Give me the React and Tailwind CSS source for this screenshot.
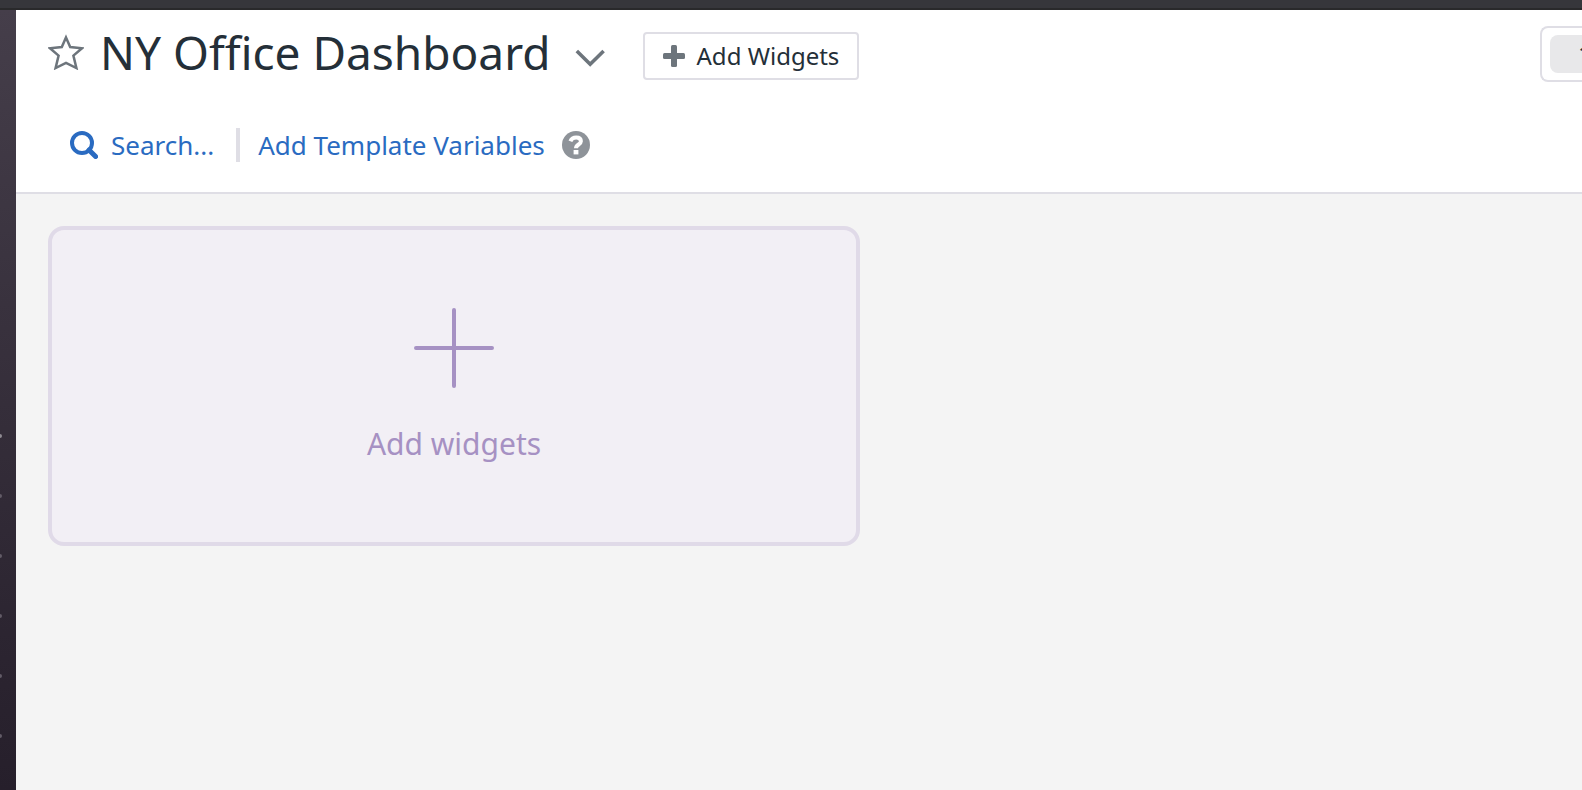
const MENU_ITEMS = ["first", "second", "third", "fourth", "fifth", "sixth"];

function StarIcon() {
  return (
    <svg viewBox="0 0 36 36" className="size-9" fill="none" stroke="#6d757c" strokeWidth="2.5" aria-hidden="true">
      <path d="M18 3.4 L22.2 13 L34 14.3 L25.4 21.6 L28.4 34 L18 28.8 L7.6 34 L10.6 21.6 L2 14.3 L13.8 13 Z" />
    </svg>
  );
}

function SearchIcon() {
  return (
    <svg viewBox="0 0 28 28" className="size-7" fill="none" stroke="currentColor" aria-hidden="true">
      <circle cx="12" cy="12" r="10" strokeWidth="4" />
      <path d="M19 19 L25.6 25.6" strokeWidth="5" strokeLinecap="round" />
    </svg>
  );
}

function HelpIcon() {
  return (
    <svg viewBox="0 0 28 28" className="size-7" aria-hidden="true">
      <circle cx="14" cy="14" r="14" fill="#8e9399" />
      <path d="M8.4 10.2 C9.5 7.6 11.6 6.5 14.2 6.5 C17.2 6.5 18.9 8 18.9 10.3 C18.9 13.6 14 13.4 14 17.2" fill="none" stroke="#fff" strokeWidth="4" />
      <rect x="11.6" y="19" width="4.8" height="4.4" fill="#fff" />
    </svg>
  );
}

export default function App() {
  return (
    <div className="flex min-h-screen flex-col overflow-hidden bg-[#f4f4f4] font-['Noto_Sans',sans-serif] text-[#242f38]">
      <div className="h-[10px] border-b-2 border-[#29292b] bg-[#36363b]" />
      <div className="flex grow">
        <nav className="w-4 shrink-0 bg-linear-to-b from-[#453e4a] to-[#261f2b] pt-[424px]">
          <ul className="flex flex-col gap-14">
            {MENU_ITEMS.map((item) => (
              <li key={item} className="h-1 w-[2px] rounded-r-full bg-[#625c67] first:bg-[#8f8b93]" />
            ))}
          </ul>
        </nav>
        <main className="flex min-w-0 grow flex-col">
          <header className="border-b-2 border-[#dfdee5] bg-white pt-4 pb-[26px] pl-8">
            <div className="flex items-center">
              <button type="button" aria-label="Favorite" className="mb-1 shrink-0">
                <StarIcon />
              </button>
              <h1 className="mb-1 ml-4 text-[46px] leading-[52px] whitespace-nowrap">NY Office Dashboard</h1>
              <button type="button" aria-label="Dashboard menu" className="mt-2 ml-6 shrink-0">
                <svg viewBox="0 0 32 20" className="h-5 w-8" fill="none" stroke="#6d757c" strokeWidth="3.6" aria-hidden="true">
                  <path d="M1.8 3 L15.2 16.2 L28.6 3" />
                </svg>
              </button>
              <button type="button" className="mt-1 ml-9 flex h-12 shrink-0 items-center gap-3 rounded-sm border-2 border-[#dfdee5] px-[18px] text-2xl leading-8 whitespace-nowrap">
                <svg viewBox="0 0 22 22" className="size-[22px]" fill="#6d757c" aria-hidden="true">
                  <rect x="0" y="8" width="22" height="6" rx="1.5" />
                  <rect x="8" y="0" width="6" height="22" rx="1.5" />
                </svg>
                Add Widgets
              </button>
              <div className="ml-auto h-14 w-[42px] shrink-0 overflow-hidden rounded-l-lg border-2 border-r-0 border-[#dfdee5] p-[7px] pl-2">
                <button type="button" className="h-[38px] w-40 rounded-lg bg-[#e8e8ea] pl-7 text-left text-2xl leading-8">1h</button>
              </div>
            </div>
            <div className="mt-[42px] flex h-[42px] items-center pl-[22px] text-[26px] leading-10 whitespace-nowrap text-[#2a6bc1]">
              <button type="button" className="flex items-center gap-[13px]">
                <SearchIcon />
                Search...
              </button>
              <div className="ml-[22px] h-[34px] w-1 bg-[#dfdee5]" />
              <button type="button" className="ml-[18px]">Add Template Variables</button>
              <button type="button" aria-label="Help" className="ml-[17px]">
                <HelpIcon />
              </button>
            </div>
          </header>
          <section className="p-8">
            <button type="button" className="flex h-80 w-full max-w-[812px] flex-col items-center justify-center gap-8 rounded-2xl border-4 border-[#e0dae8] bg-[#f2eff5] pt-1 text-[30px] leading-12 text-[#a691c3]">
              <svg viewBox="0 0 80 80" className="size-20" fill="none" stroke="currentColor" strokeWidth="4" strokeLinecap="round" aria-hidden="true">
                <path d="M2 40 H78 M40 2 V78" />
              </svg>
              Add widgets
            </button>
          </section>
        </main>
      </div>
    </div>
  );
}
